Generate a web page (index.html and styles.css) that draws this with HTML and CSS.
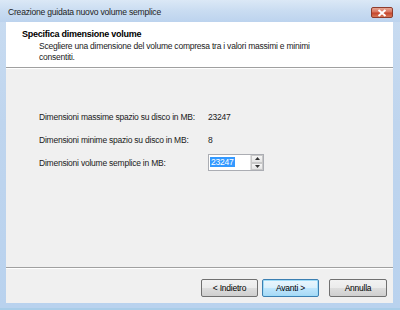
FILE: index.html
```html
<!DOCTYPE html>
<html>
<head>
<meta charset="utf-8">
<link rel="stylesheet" href="styles.css">
</head>
<body>
<div class="window">
  <div class="titlebar">
    <span class="title">Creazione guidata nuovo volume semplice</span>
    <div class="close">
      <svg width="10" height="8" viewBox="0 0 10 8"><path d="M1.5 1 L8.5 7 M8.5 1 L1.5 7" stroke="#fff" stroke-width="2" fill="none"/></svg>
    </div>
  </div>
  <div class="client">
    <div class="header">
      <div class="h-title">Specifica dimensione volume</div>
      <div class="h-sub">Scegliere una dimensione del volume compresa tra i valori massimi e minimi consentiti.</div>
    </div>
    <div class="content">
      <div class="row"><span class="label">Dimensioni massime spazio su disco in MB:</span><span class="value">23247</span></div>
      <div class="row"><span class="label">Dimensioni minime spazio su disco in MB:</span><span class="value">8</span></div>
      <div class="row"><span class="label">Dimensioni volume semplice in MB:</span>
        <div class="spin">
          <div class="spin-field"><span class="sel">23247</span></div>
          <div class="spin-btns">
            <div class="sbtn"><svg width="5" height="3" viewBox="0 0 5 3"><path d="M0 3 L2.5 0 L5 3Z" fill="#333"/></svg></div>
            <div class="sbtn"><svg width="5" height="3" viewBox="0 0 5 3"><path d="M0 0 L2.5 3 L5 0Z" fill="#333"/></svg></div>
          </div>
        </div>
      </div>
    </div>
    <div class="footer">
      <button class="btn">&lt; Indietro</button>
      <button class="btn default">Avanti &gt;</button>
      <button class="btn cancel">Annulla</button>
    </div>
  </div>
</div>
</body>
</html>
```
FILE: styles.css
```css
* { box-sizing: border-box; }
body {
  margin: 0;
  width: 400px;
  height: 310px;
  overflow: hidden;
  font-family: "Liberation Sans", Arial, sans-serif;
  font-size: 8.5px;
  letter-spacing: -0.23px;
  color: #1a1a1a;
}
.window {
  width: 400px;
  height: 310px;
  display: flex;
  flex-direction: column;
  background: linear-gradient(to bottom, #c9dcf1 0%, #bfd5ee 40%, #b9d2ee 100%);
  border-bottom: 2px solid #a9cde8;
}
.titlebar {
  height: 22px;
  display: flex;
  align-items: center;
  justify-content: space-between;
  padding: 0 7px 0 8px;
  background: linear-gradient(to bottom, #dbe8f6 0%, #c9dcf1 50%, #bcd3ee 100%);
}
.title {
  font-size: 8.6px;
  color: #1e1e1e;
  margin-top: 1px;
}
.close {
  width: 22px;
  height: 11px;
  margin-top: 3px;
  border: 1px solid #8e3c2c;
  border-radius: 2px;
  background: linear-gradient(to bottom, #e6a593 0%, #d9745e 45%, #c5442b 55%, #d6795a 100%);
  display: flex;
  align-items: center;
  justify-content: center;
}
.client {
  flex: 1;
  margin: 0 7px 5px 6px;
  display: flex;
  flex-direction: column;
  background: #f0f0f0;
}
.header {
  height: 46px;
  background: #fff;
  border-bottom: 1px solid #a0a0a0;
  padding: 7px 0 0 16px;
  box-shadow: 0 1px 0 #fff;
}
.h-title {
  font-weight: bold;
  font-size: 9px;
  letter-spacing: -0.25px;
  line-height: 11px;
  color: #000;
}
.h-sub {
  padding-left: 17px;
  width: 310px;
  line-height: 11px;
  margin-top: 1px;
}
.content {
  flex: 1;
  padding: 44px 0 0 33px;
  display: flex;
  flex-direction: column;
  gap: 11px;
}
.row {
  display: flex;
  align-items: flex-start;
  height: 12px;
  white-space: nowrap;
}
.label { width: 169px; }
.spin {
  display: flex;
  width: 56px;
  height: 17px;
  margin-top: -4px;
  border: 1px solid #abadb3;
  background: #fff;
}
.spin-field {
  flex: 1;
  padding: 2px 0 0 1px;
}
.sel {
  background: #3399ff;
  color: #fff;
  padding: 0 1px;
}
.spin-btns {
  width: 13px;
  display: flex;
  flex-direction: column;
  border-left: 1px solid #e0e0e0;
}
.sbtn {
  flex: 1;
  display: flex;
  align-items: center;
  justify-content: center;
  background: linear-gradient(to bottom, #f6f6f6, #e4e4e4);
  border: 1px solid #c8c8c8;
}
.footer {
  height: 36px;
  border-top: 1px solid #a0a0a0;
  box-shadow: inset 0 1px 0 #fff;
  display: flex;
  justify-content: flex-end;
  align-items: flex-start;
  padding: 11px 6px 0 0;
}
.btn {
  font-family: inherit;
  font-size: 8.5px;
  letter-spacing: -0.23px;
  width: 57px;
  height: 18px;
  padding: 0;
  border: 1px solid #707070;
  border-radius: 2px;
  background: linear-gradient(to bottom, #f2f2f2 0%, #ebebeb 50%, #dddddd 51%, #cfcfcf 100%);
  color: #000;
  margin-left: 4px;
}
.btn.default {
  border-color: #3c7fb1;
  background: linear-gradient(to bottom, #eaf6fd 0%, #d9f0fc 50%, #bee6fd 51%, #a7d9f5 100%);
  box-shadow: inset 0 0 0 1px #9fdcf8;
}
.btn.cancel { margin-left: 10px; width: 58px; }
```
